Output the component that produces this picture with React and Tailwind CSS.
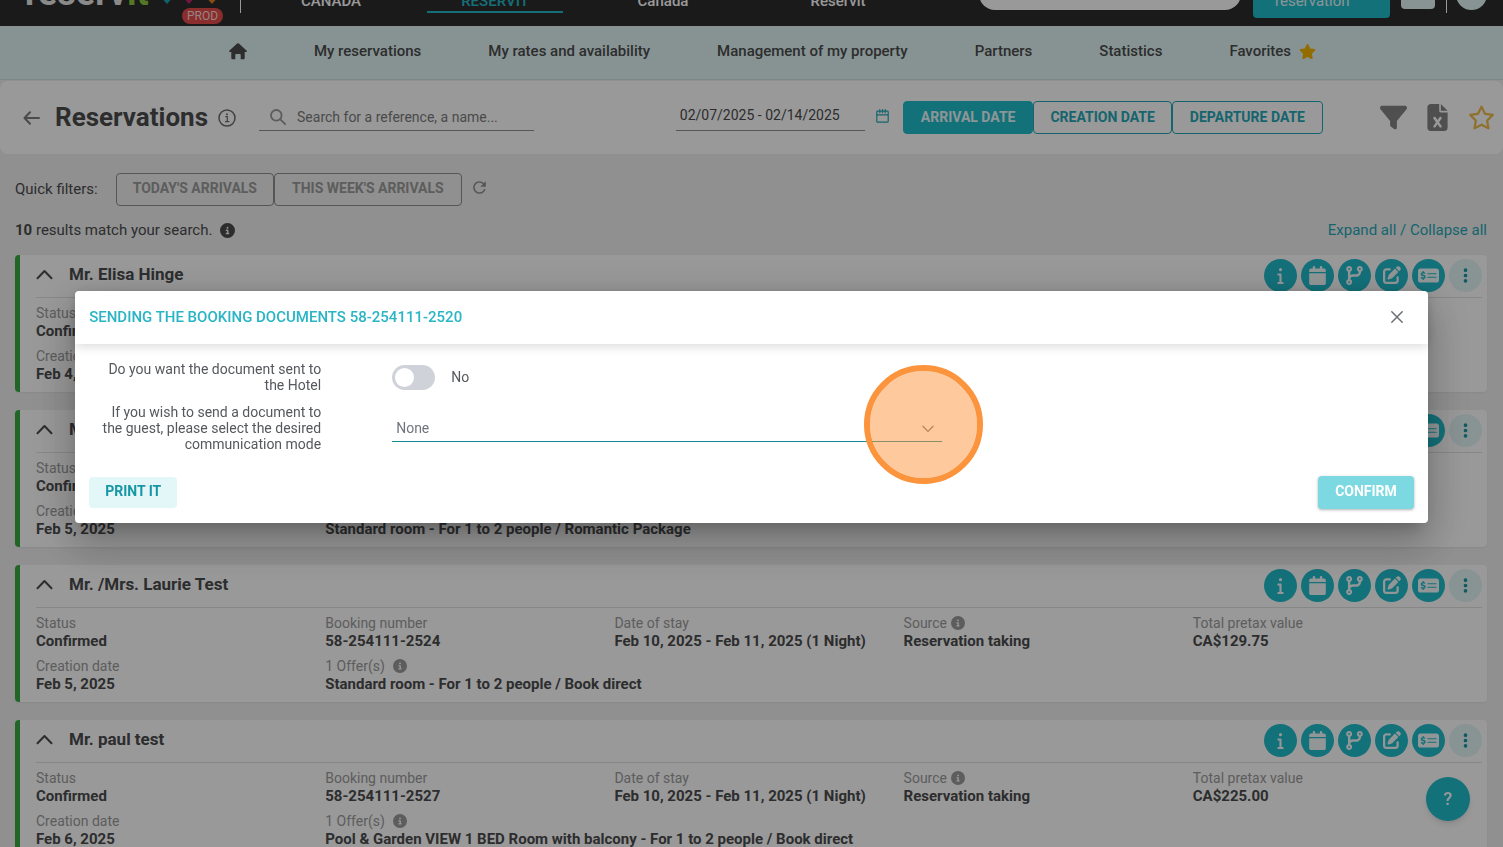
import React, { useState } from 'react';
import {
  FaInfo, FaCodeBranch, FaPenToSquare, FaMoneyCheckDollar, FaEllipsisVertical,
  FaFilter, FaFileExcel, FaRegStar, FaStar, FaCircleInfo, FaCalendar,
} from 'react-icons/fa6';
import { MdRefresh } from 'react-icons/md';

const NAV = ['My reservations', 'My rates and availability', 'Management of my property', 'Partners', 'Statistics'];

const TABS = [
  { label: 'CANADA', cls: 'w-32 border-transparent text-white' },
  { label: 'RESERVIT', cls: 'w-[136px] border-[#26b9c8] text-[#26b9c8]' },
  { label: 'Canada', cls: 'w-[136px] border-transparent text-white' },
  { label: 'Reservit', cls: 'w-[150px] border-transparent text-white' },
];

const BOOKINGS = [
  { name: 'Mr. Elisa Hinge', created: 'Feb 4, 2025', number: '58-254111-2520', stay: 'Feb 10, 2025 - Feb 11, 2025 (1 Night)', total: 'CA$129.75', offer: 'Standard room - For 1 to 2 people / Book direct' },
  { name: 'Mr. Laurie Test', created: 'Feb 5, 2025', number: '58-254111-2522', stay: 'Feb 10, 2025 - Feb 11, 2025 (1 Night)', total: 'CA$129.75', offer: 'Standard room - For 1 to 2 people / Romantic Package' },
  { name: 'Mr. /Mrs. Laurie Test', created: 'Feb 5, 2025', number: '58-254111-2524', stay: 'Feb 10, 2025 - Feb 11, 2025 (1 Night)', total: 'CA$129.75', offer: 'Standard room - For 1 to 2 people / Book direct' },
  { name: 'Mr. paul test', created: 'Feb 6, 2025', number: '58-254111-2527', stay: 'Feb 10, 2025 - Feb 11, 2025 (1 Night)', total: 'CA$225.00', offer: 'Pool & Garden VIEW 1 BED Room with balcony - For 1 to 2 people / Book direct' },
];

const ACTIONS = [
  { label: 'Details', icon: <FaInfo size={17} /> },
  { label: 'Calendar', icon: <FaCalendar size={19} /> },
  { label: 'Split', icon: <FaCodeBranch size={19} /> },
  { label: 'Edit', icon: <FaPenToSquare size={18} /> },
  { label: 'Payment', icon: <FaMoneyCheckDollar size={21} /> },
];

function HomeIcon() {
  return (
    <svg width="18" height="17" viewBox="0 0 18 17" fill="currentColor">
      <path d="M8.1.6a1.3 1.3 0 0 1 1.8 0l7.6 6.9c.7.6.3 1.6-.6 1.6h-1.2v5.8c0 .9-.5 1.4-1.4 1.4h-2.6v-4.2c0-.7-.4-1.1-1.1-1.1H7.4c-.7 0-1.1.4-1.1 1.1v4.2H3.7c-.9 0-1.4-.5-1.4-1.4V9.1H1.1C.2 9.1-.2 8.1.5 7.5z" />
    </svg>
  );
}

function Field({ label, value, info, wide }) {
  return (
    <div className={wide ? 'col-span-4' : ''}>
      <p className="flex items-center text-[#9b9b9b] font-normal">
        {label}
        {info && <FaCircleInfo size={14} className={wide ? 'ml-2' : 'ml-1'} />}
      </p>
      <p className="font-bold whitespace-nowrap text-[15px]">{value}</p>
    </div>
  );
}

function BookingCard({ b }) {
  return (
    <article className="bg-white rounded border-l-5 border-[#38ab42] shadow-xs pl-4 pr-[5px] pb-[9px]">
      <div className="h-[43px] pb-0.5 flex items-center border-b border-[#e2e2e2]">
        <button aria-label="Collapse" className="w-[17px] mr-4 pb-0.5">
          <svg width="17" height="11" viewBox="0 0 17 11" fill="none" stroke="currentColor" strokeWidth="2" strokeLinecap="round" strokeLinejoin="round">
            <path d="M1.5 9.3 8.5 2l7 7.3" />
          </svg>
        </button>
        <h2 className="text-[17px] font-bold">{b.name}</h2>
        <div className="ml-auto flex gap-1">
          {ACTIONS.map((a) => (
            <button key={a.label} aria-label={a.label} className="w-[33px] h-[33px] rounded-full bg-[#21bccc] text-[#f4fbfb] flex items-center justify-center">
              {a.icon}
            </button>
          ))}
          <button aria-label="More" className="w-[33px] h-[33px] rounded-full bg-[#e3f5f6] text-[#1797a6] flex items-center justify-center">
            <FaEllipsisVertical size={17} />
          </button>
        </div>
      </div>
      <div className="grid grid-cols-5 gap-y-[7px] pt-[6px] text-sm leading-[18px]">
        <Field label="Status" value="Confirmed" />
        <Field label="Booking number" value={b.number} />
        <Field label="Date of stay" value={b.stay} />
        <Field label="Source" value="Reservation taking" info />
        <Field label="Total pretax value" value={b.total} />
        <Field label="Creation date" value={b.created} />
        <Field label="1 Offer(s)" value={b.offer} info wide />
      </div>
    </article>
  );
}

function TopBar() {
  return (
    <header className="h-[26px] overflow-hidden bg-[#2c2c2c] flex items-end text-[15px] leading-4 font-medium">
      <div className="relative ml-[22px] w-[219px] h-10 shrink-0 border-r border-white mb-[13px]">
        <span className="absolute left-[3px] bottom-1 text-[36px] font-bold leading-8 text-[#e6e6e6]">
          reserv<span className="text-[#8cc63f]">it</span>
        </span>
        <svg className="absolute left-[135px] bottom-2" width="64" height="20" viewBox="0 0 64 20">
          <path d="M3 11h14l-7 8z" fill="#17a5b9" />
          <path d="M25 11h14l-7 8z" fill="#c5226f" />
          <path d="M48 11h14l-7 8z" fill="#e0821e" />
        </svg>
        <span className="absolute left-40 -bottom-[11px] h-4 px-[5px] rounded-full bg-[#e64b4b] text-[#ffd9d9] text-xs leading-4 font-normal">PROD</span>
      </div>
      <nav className="flex gap-8 ml-[26px] mb-[13px]">
        {TABS.map((t) => (
          <a key={t.label} href="#" className={`text-center border-b-2 pb-0.5 ${t.cls}`}>{t.label}</a>
        ))}
      </nav>
      <div className="ml-auto mr-4 flex items-end">
        <input aria-label="Search" className="w-[262px] h-8 rounded-full bg-white mb-4" />
        <button className="w-[137px] h-14 rounded bg-[#21bccc] text-[#e6fafa] ml-3 mb-2 pl-[22px] pb-[9px] flex items-end text-left font-normal">
          <span className="w-20">New reservation</span>
        </button>
        <button aria-label="Messages" className="w-[34px] h-8 rounded bg-[#e3f5f6] ml-[11px] mb-[17px]" />
        <span className="w-px h-10 bg-white ml-[11px] mb-[13px]" />
        <button aria-label="Account" className="w-[31px] h-[31px] rounded-full bg-[#e3f5f6] ml-[9px] mb-4" />
      </div>
    </header>
  );
}

function TitleBar() {
  return (
    <div className="bg-white rounded-lg h-[73px] mt-px mb-[19px] flex items-center px-2">
      <button aria-label="Back" className="ml-[15px] text-[#7d7d7d]">
        <svg width="17" height="14" viewBox="0 0 17 14" fill="none" stroke="currentColor" strokeWidth="2" strokeLinecap="round" strokeLinejoin="round">
          <path d="M16 7H1.5M7 1.2 1.5 7 7 12.8" />
        </svg>
      </button>
      <h1 className="ml-[15px] text-[26px] font-bold">Reservations</h1>
      <svg className="ml-[10px] text-[#6d6d6d] shrink-0" width="18" height="18" viewBox="0 0 18 18" fill="none" stroke="currentColor" strokeWidth="1.5">
        <circle cx="9" cy="9" r="8" />
        <path d="M7.3 7.7h2v5M7 12.7h4.4" strokeWidth="1.2" />
        <circle cx="9" cy="5.2" r="1" fill="currentColor" stroke="none" />
      </svg>
      <label className="ml-[23px] w-[275px] h-[27px] border-b border-[#8f8f8f] flex items-center">
        <svg className="mx-[11px] text-[#9a9a9a] shrink-0" width="16" height="16" viewBox="0 0 16 16" fill="none" stroke="currentColor" strokeWidth="1.8" strokeLinecap="round">
          <circle cx="6.3" cy="6.3" r="5.3" />
          <path d="m10.3 10.3 4.9 4.9" />
        </svg>
        <input aria-label="Search reservations" placeholder="Search for a reference, a name..." className="w-full text-sm outline-none placeholder:text-[#7c7c7c]" />
      </label>
      <input aria-label="Dates" defaultValue="02/07/2025 - 02/14/2025" className="ml-auto w-[189px] h-[27px] pb-1 pl-1 text-sm border-b border-[#8f8f8f] outline-none" />
      <button aria-label="Open calendar" className="ml-[11px] pb-1 text-[#26a8b8]">
        <svg width="13" height="14" viewBox="0 0 13 14" fill="none" stroke="currentColor" strokeWidth="1.2" strokeLinecap="round">
          <rect x=".8" y="2.2" width="11.4" height="11" rx=".8" />
          <path d="M.8 5.8h11.4M3.8.7v3M9.2.7v3M6.5.7v3" />
        </svg>
      </button>
      <div className="ml-[14px] flex text-sm font-bold">
        <button className="h-[33px] px-[17px] pb-0.5 rounded border border-[#21bccc] bg-[#21bccc] text-[#e9fbfb]">ARRIVAL DATE</button>
        <button className="h-[33px] px-4 pb-0.5 rounded border border-[#26a8b8] text-[#26a8b8]">CREATION DATE</button>
        <button className="h-[33px] px-[17px] pb-0.5 rounded border border-[#26a8b8] text-[#26a8b8]">DEPARTURE DATE</button>
      </div>
      <div className="ml-[57px] flex items-center text-[#848484]">
        <button aria-label="Filter"><FaFilter size={27} /></button>
        <button aria-label="Export" className="ml-[17px]"><FaFileExcel size={27} /></button>
        <button aria-label="Favorite" className="ml-[17px] text-[#eebd4b]"><FaRegStar size={27} /></button>
      </div>
    </div>
  );
}

function SendModal() {
  const [toHotel, setToHotel] = useState(false);
  return (
    <div className="fixed inset-0 bg-black/40 flex items-center justify-center pb-[33px]">
      <div role="dialog" aria-labelledby="send-title" className="w-[90%] bg-white rounded text-[#55585c] text-sm leading-4 shadow-[0_11px_15px_-7px_rgba(0,0,0,0.2),0_24px_38px_3px_rgba(0,0,0,0.14),0_9px_46px_8px_rgba(0,0,0,0.12)]">
        <div className="h-[53px] pl-[14px] pr-6 pb-0.5 flex items-center justify-between rounded-t shadow-[0_2px_12px_rgba(0,0,0,0.16)]">
          <h2 id="send-title" className="text-[15px] font-medium text-[#29b5c5]">SENDING THE BOOKING DOCUMENTS 58-254111-2520</h2>
          <button aria-label="Close">
            <svg width="14" height="14" viewBox="0 0 14 14" fill="none" stroke="#6b6f75" strokeWidth="1.5" strokeLinecap="round">
              <path d="m1.8 1.8 10.4 10.4M12.2 1.8 1.8 12.2" />
            </svg>
          </button>
        </div>
        <div className="px-[14px] pt-[17px] pb-[14px]">
          <div className="flex items-center gap-[71px]">
            <label htmlFor="to-hotel" className="w-[232px] pl-2 text-right">Do you want the document sent to the Hotel</label>
            <div className="flex items-center gap-4">
              <input
                id="to-hotel"
                type="checkbox"
                role="switch"
                checked={toHotel}
                onChange={(e) => setToHotel(e.target.checked)}
                className="appearance-none w-[43px] h-[25px] rounded-full bg-[#cfd2d9] p-[3px] before:block before:w-[19px] before:h-[19px] before:rounded-full before:bg-white checked:bg-[#21bccc] checked:before:ml-auto"
              />
              <span>{toHotel ? 'Yes' : 'No'}</span>
            </div>
          </div>
          <div className="flex items-center gap-[71px] mt-[11px]">
            <label htmlFor="mode" className="w-[232px] text-right">If you wish to send a document to the guest, please select the desired communication mode</label>
            <div className="relative flex-1 max-w-[550px] border-b border-[#128a96]">
              <select id="mode" className="block w-full h-[26px] appearance-none pl-1 text-[#6f757c] outline-none">
                <option>None</option>
                <option>E-mail</option>
              </select>
              <svg className="absolute right-2 top-[10px] pointer-events-none" width="12" height="8" viewBox="0 0 13 8" fill="none" stroke="#6f757c" strokeWidth="1.3" strokeLinecap="round">
                <path d="m1 1 5.5 5.7L12 1" />
              </svg>
              {/* click highlight */}
              <span className="absolute -right-[41px] -top-[50px] w-[119px] h-[119px] rounded-full border-6 border-[#fb943c] bg-[#fb943c]/50 bg-clip-padding pointer-events-none" />
            </div>
          </div>
          <div className="flex items-center justify-between mt-6 font-bold">
            <button className="h-[31px] px-4 pb-[3px] rounded bg-[#e3f6f8] text-[#1797a6]">PRINT IT</button>
            <button className="h-[33px] px-[17px] pb-[3px] rounded bg-[#7cd9e2] text-white shadow-[0_1px_3px_rgba(0,0,0,0.3)]">CONFIRM</button>
          </div>
        </div>
      </div>
    </div>
  );
}

export default function App() {
  return (
    <div className="h-screen overflow-hidden bg-[#f0f0f0] text-[#4b4c4e] font-[Roboto,sans-serif]">
      <TopBar />
      <nav className="h-[54px] bg-[#e1f6f4] border-b border-[#cfe3e3] pl-[42px] pb-0.5 flex items-center justify-center gap-[67px] text-[15px] font-medium whitespace-nowrap">
        <a href="#" aria-label="Home"><HomeIcon /></a>
        {NAV.map((n) => <a key={n} href="#">{n}</a>)}
        <a href="#" className="flex items-center gap-2">
          Favorites <FaStar size={17} className="text-[#f5b400]" />
        </a>
      </nav>
      <TitleBar />

      <main className="px-4 pl-[15px]">
        <div className="flex items-center text-[15px]">
          <span className="mr-[18px]">Quick filters:</span>
          <button className="h-[33px] px-4 pb-[3px] rounded border border-[#8f8f8f] text-sm font-bold text-[#9b9b9b]">TODAY'S ARRIVALS</button>
          <button className="h-[33px] px-[17px] pb-[3px] rounded border border-[#8f8f8f] text-sm font-bold text-[#9b9b9b]">THIS WEEK'S ARRIVALS</button>
          <button aria-label="Refresh" className="ml-2 pb-1 text-[#8f8f8f]"><MdRefresh size={19} /></button>
        </div>
        <div className="flex items-center justify-between mt-[14px] mb-[14px] text-[15px] leading-[21px]">
          <p className="flex items-center"><b>10</b>&nbsp;results match your search. <FaCircleInfo size={15} className="ml-2" /></p>
          <p className="text-[#26a8b8]"><a href="#">Expand all</a> / <a href="#">Collapse all</a></p>
        </div>
        <div className="flex flex-col gap-[18px]">
          {BOOKINGS.map((b) => <BookingCard key={b.number} b={b} />)}
        </div>
      </main>

      <button aria-label="Help" className="fixed right-[33px] bottom-[26px] w-11 h-11 rounded-full bg-[#21bccc] text-white text-lg font-medium shadow-md">?</button>
      <SendModal />
    </div>
  );
}
